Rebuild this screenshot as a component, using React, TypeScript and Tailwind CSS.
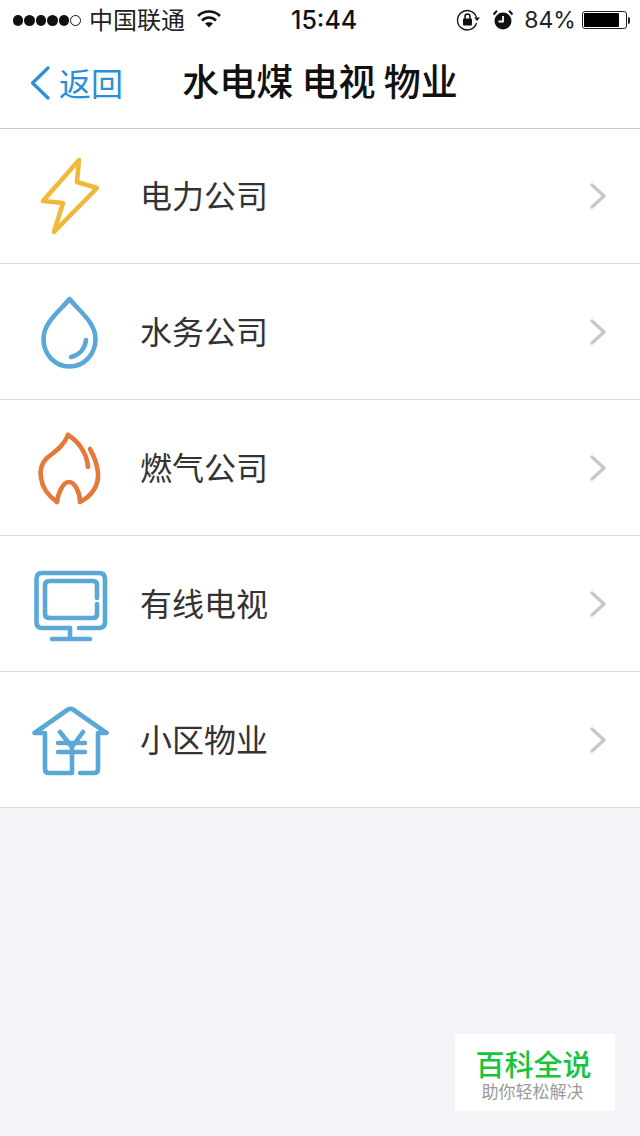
const rows = [
  { name: "电力公司", icon: <BoltIcon /> },
  { name: "水务公司", icon: <DropIcon /> },
  { name: "燃气公司", icon: <FlameIcon /> },
  { name: "有线电视", icon: <TvIcon /> },
  { name: "小区物业", icon: <HouseIcon /> },
];

function IconBase({ color, width = 4.6, children }: { color: string; width?: number; children: React.ReactNode }) {
  return (
    <svg
      width="80"
      height="80"
      viewBox="0 0 80 80"
      fill="none"
      stroke={color}
      strokeWidth={width}
      strokeLinecap="round"
      strokeLinejoin="round"
      className="shrink-0"
    >
      {children}
    </svg>
  );
}

function BoltIcon() {
  return (
    <IconBase color="#f0b93c">
      <path d="M49 4 L13 45 L33 47 L24 76 L67 32 L47 26 Z" />
    </IconBase>
  );
}

function DropIcon() {
  return (
    <IconBase color="#5ba7d8">
      <path d="M39.5 7 C31 18 13.500 30 13.500 47 C13.500 62 24.500 74.500 39.500 74.500 C54.500 74.500 65.500 62 65.500 47 C65.500 30 48 18 39.5 7 Z" />
      <path d="M56 48 C55 57 49 63 41 65" />
    </IconBase>
  );
}

function FlameIcon() {
  return (
    <IconBase color="#e4793a">
      <path d="M38 7 C33 20 22 25 16 31 C8 39 7 60 27 74 C28 65 33 54 39 54 C45 54 50 65 50 74 C62 68 69 57 68 45 C67 35 64 28 60 21" />
      <path d="M38 7 C48 13 57 25 58 39" />
    </IconBase>
  );
}

function TvIcon() {
  return (
    <IconBase color="#5ba7d8">
      <path d="M40 64 H12 Q6.500 64 6.500 58 V15 Q6.500 9 12 9 H69 Q75 9 75 15 V58 Q75 64 69 64 H49" />
      <path d="M67 34 V21 Q67 17 63 17 H20 Q15 17 15 21 V50 Q15 54 20 54 H63 Q67 54 67 50 V40" />
      <path d="M40 64 V75 M22 75 H60" />
    </IconBase>
  );
}

function HouseIcon() {
  return (
    <IconBase color="#5ba7d8">
      <path d="M41.5 73 H19 Q15 73 15 69 V33 H4.500 L38 9.500 Q40.5 8 43 9.500 L76.500 33 H68 V69 Q68 73 64 73 H50" />
      <path d="M30 32 L42 47 L53 32 M28 43 H55 M28 52 H55 M42 43 V73" />
    </IconBase>
  );
}

function StatusBar() {
  return (
    <div className="flex h-10 items-center bg-white text-black">
      <div className="ml-[13px] flex w-[68px] gap-px">
        {[0, 1, 2, 3, 4].map((i) => (
          <span key={i} className="size-[11px] rounded-full bg-[#111]" />
        ))}
        <span className="size-[11px] rounded-full border border-[#111]" />
      </div>
      <span className="mb-[3px] ml-[8px] text-[24px] leading-none text-[#222]">中国联通</span>
      <svg width="26" height="20" viewBox="0 0 26 20" className="ml-[11px] mb-[2px]" fill="none" stroke="#111" strokeWidth="2.600">
        <path d="M2 7 C8 1 18 1 24 7" />
        <path d="M6 11.500 C10 7.500 16 7.500 20 11.500" />
        <path d="M13 18.500 L9 14.500 C11 12.700 15 12.700 17 14.500 Z" fill="#111" stroke="none" />
      </svg>
      <span className="ml-[69px] text-[25px] font-medium leading-none text-[#111] [font-family:Inter,sans-serif]">15:44</span>
      <svg width="24" height="24" viewBox="0 0 24 24" className="ml-[99px]" fill="none" stroke="#111" strokeWidth="1.300">
        <path d="M20.500 15 A9.700 9.700 0 1 1 20.500 9.500" />
        <path d="M18 9.500 H24 L21 13 Z" fill="#111" stroke="none" />
        <rect x="7" y="10.500" width="9" height="7" rx="1" fill="#111" stroke="none" />
        <path d="M9 11 V8.500 A2.500 2.500 0 0 1 14 8.500 V11" strokeWidth="1.500" />
      </svg>
      <svg width="24" height="24" viewBox="0 0 24 24" className="ml-[11px]" fill="none">
        <circle cx="12" cy="13" r="8.500" fill="#111" />
        <path d="M12 8 V13.500 H7.500" stroke="#fff" strokeWidth="1.800" />
        <path d="M2.500 6.500 L6 2.800 M21.500 6.500 L18 2.800" stroke="#111" strokeWidth="2" />
      </svg>
      <span className="ml-[9px] text-[23px] leading-none text-[#222] [font-family:Inter,sans-serif]">84%</span>
      <div className="ml-[6px] flex items-center">
        <div className="flex h-[18px] w-[45px] items-center rounded-[3px] border border-[#222] p-[1px]">
          <div className="h-[14px] w-[35px] rounded-[1px] bg-black" />
        </div>
        <div className="ml-px h-[7px] w-[2px] rounded-r-full bg-[#222]" />
      </div>
    </div>
  );
}

function NavBar() {
  return (
    <div className="grid h-[89px] grid-cols-[1fr_auto_1fr] items-center border-b border-[#c8c8c8] bg-white pb-[2px]">
      <div className="flex items-center pl-[30px] text-[#2a8fd6]">
        <svg width="20" height="34" viewBox="0 0 20 34" fill="none" stroke="currentColor" strokeWidth="3.200" strokeLinecap="round" strokeLinejoin="round">
          <path d="M18 2 L2.500 17 L18 32" />
        </svg>
        <span className="mb-[3px] ml-[9px] text-[32px] leading-none">返回</span>
      </div>
      <h1 className="mb-[5px] whitespace-pre text-[37px] font-medium leading-none text-[#111]">水电煤 电视 物业</h1>
      <div />
    </div>
  );
}

export default function App() {
  return (
    <div className="relative min-h-[1136px] w-full bg-[#f3f3f8] [font-family:'Noto_Sans_CJK_SC','Noto_Sans',sans-serif]">
      <StatusBar />
      <NavBar />
      <div className="bg-white">
        {rows.map((row) => (
          <div key={row.name} className="flex h-[136px] items-start border-b border-[#dcdcdc] pl-[30px] pt-[28px] first:h-[135px] first:pt-[27px]">
            {row.icon}
            <div className="flex h-20 flex-1 items-center pl-[30px] pr-[33px]">
              <span className="mb-[4px] text-[32px] leading-none text-[#333]">{row.name}</span>
              <svg width="16" height="26" viewBox="0 0 16 26" className="ml-auto mr-px" fill="none" stroke="#c7c7cc" strokeWidth="3.400" strokeLinecap="round" strokeLinejoin="round">
                <path d="M2 2 L14 13 L2 24" />
              </svg>
            </div>
          </div>
        ))}
      </div>
      {/* watermark sits over the page */}
      <div className="absolute left-[455px] top-[1034px] flex h-[77px] w-[160px] flex-col items-center bg-white pr-[3px] pt-[11px]">
        <span className="text-[29px] font-medium leading-[36px] text-[#17c53c]">百科全说</span>
        <span className="mr-[2px] text-[17px] leading-[20px] text-[#9a9a9a]">助你轻松解决</span>
      </div>
    </div>
  );
}
